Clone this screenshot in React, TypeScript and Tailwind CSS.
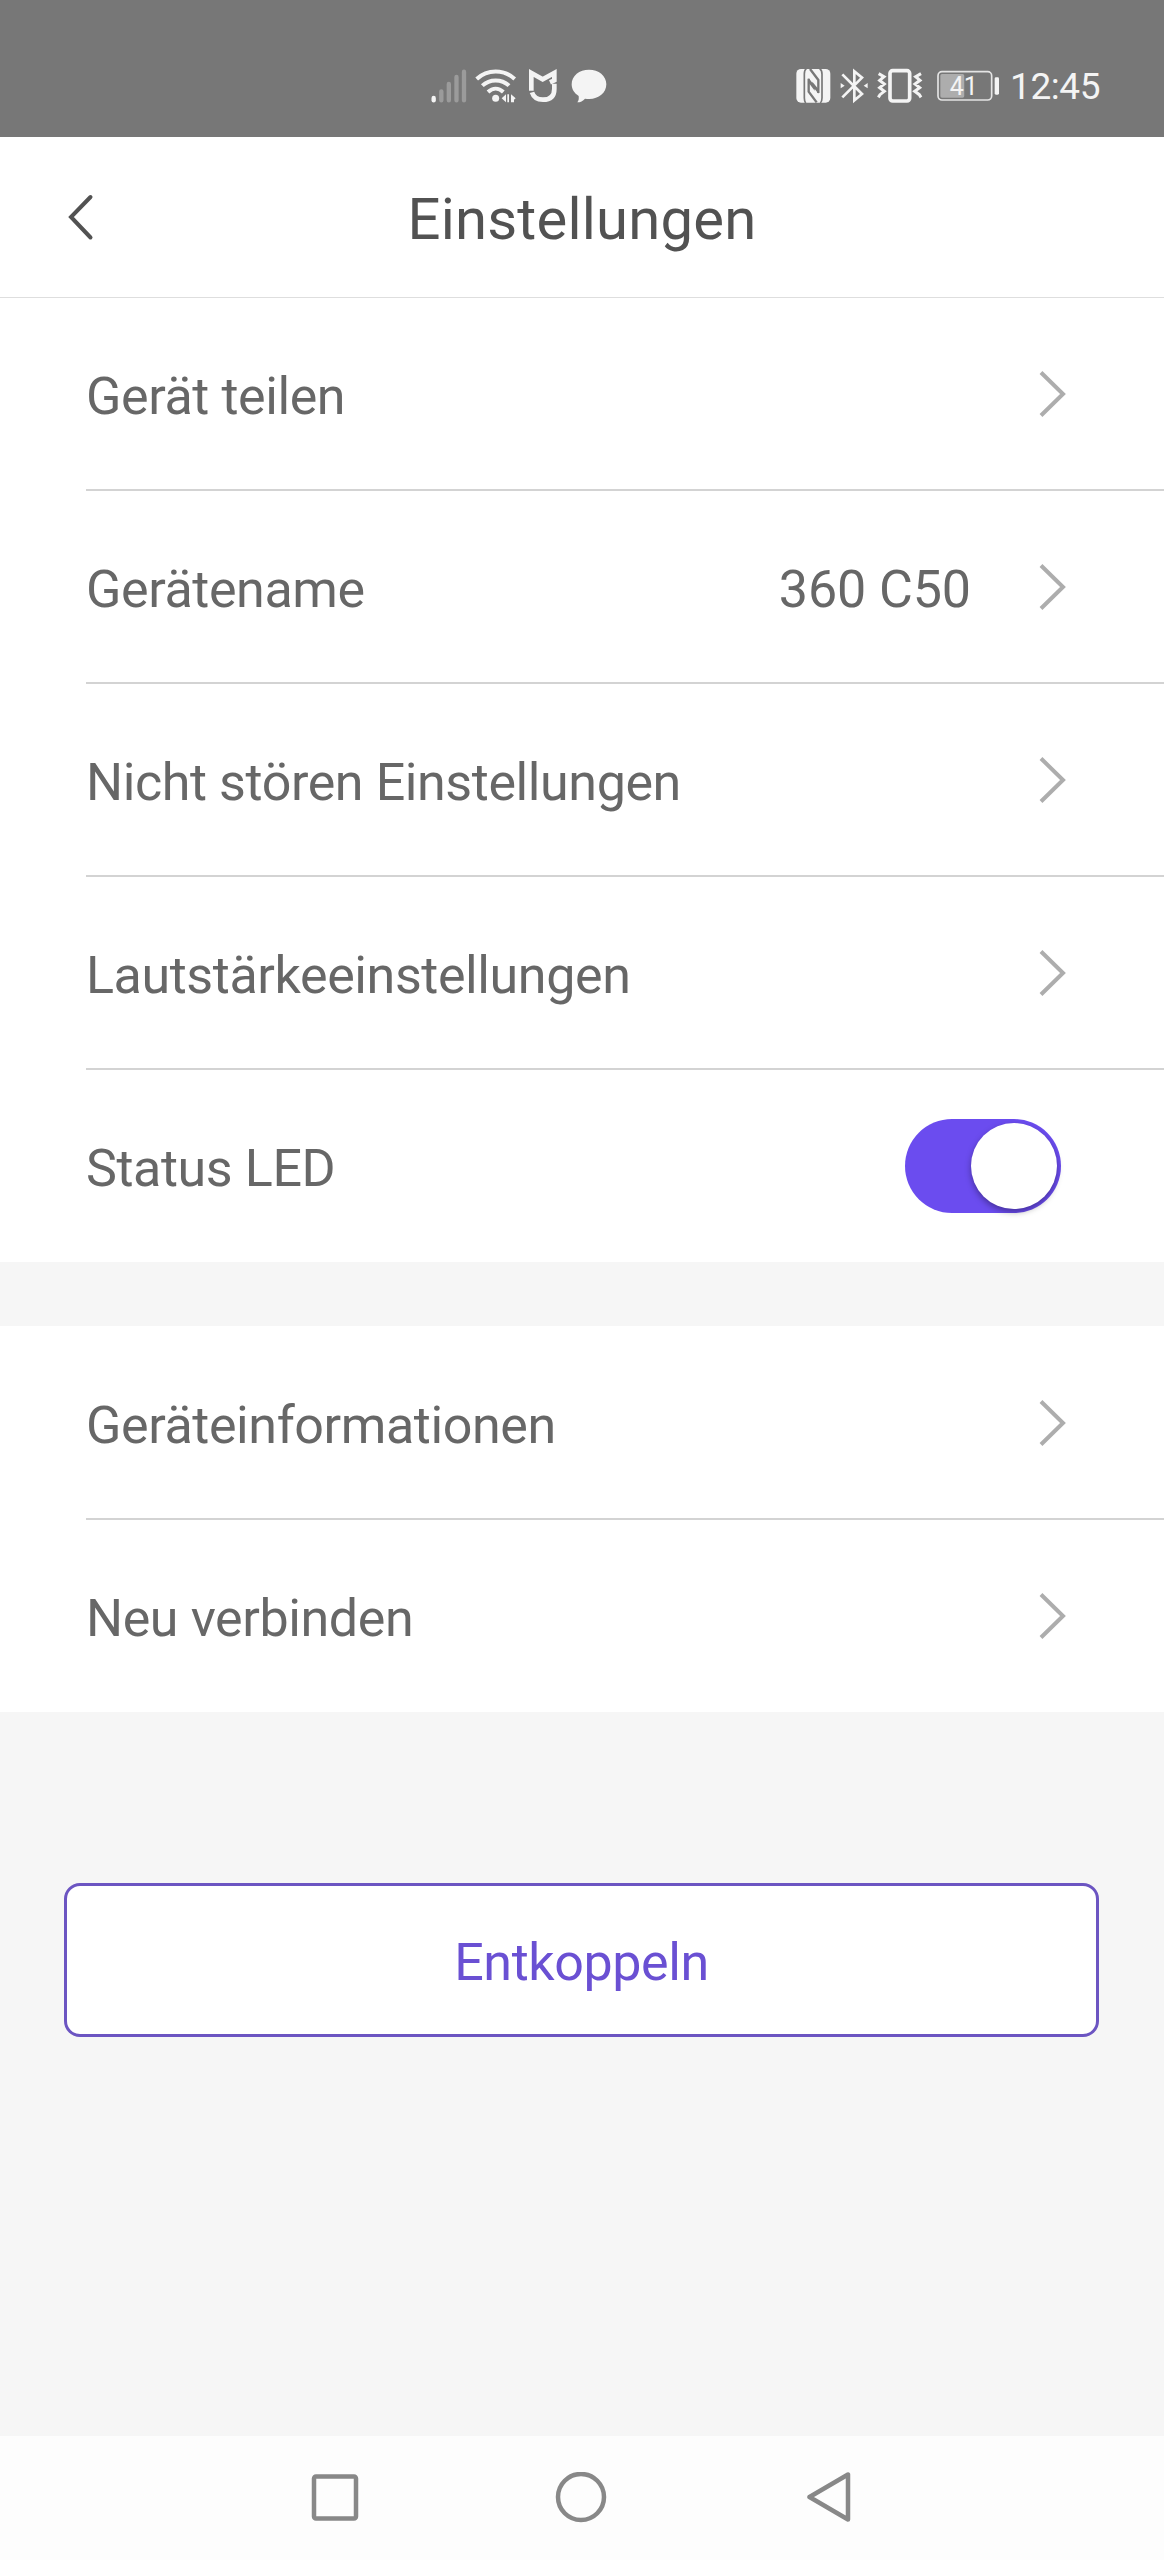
import { useState } from 'react'

interface RowProps {
  label: string
  value?: string
  last?: boolean
  children?: React.ReactNode
}

function SignalIcon() {
  return (
    <svg className="h-[70px] w-[42px]" viewBox="30 0 126 210" fill="none" strokeLinecap="round" strokeWidth="13">
      <path d="M41 144V151" stroke="#f4f4f4" />
      <path d="M64 124V151M86.5 102V151M109.5 81V151M132 65V151" stroke="#9b9b9b" />
    </svg>
  )
}

function WifiIcon() {
  return (
    <svg className="h-[70px] w-12" viewBox="156 0 144 210" fill="none" stroke="#f4f4f4" strokeWidth="12">
      <path d="M170 87C202 57 252 57 284 87M187 107C209 86 245 86 267 107M204 126C218 113 236 113 250 126" />
      <circle cx="227" cy="145" r="10.5" fill="#f4f4f4" stroke="none" />
      <path d="M245 145L258 133V157ZM262 133H267V157H262ZM273 133L287 145L282 149V157H273Z" fill="#f4f4f4" stroke="none" />
    </svg>
  )
}

function MiIcon() {
  return (
    <svg className="h-[70px] w-[46px]" viewBox="300 0 138 210" fill="none" stroke="#f4f4f4" strokeWidth="14">
      <path d="M334 122V69L368 88L403 69V91L390 97" />
      <path d="M336 127C341 143 352 149 369 149C391 149 403 138 403 116V101" />
    </svg>
  )
}

function ChatIcon() {
  return (
    <svg className="h-[70px] w-11" viewBox="438 0 132 210" fill="#f4f4f4">
      <path d="M507 59C536 59 559 77 559 103C559 129 536 147 508 147C503 147 499 147 495 146C489 153 481 157 472 157C476 152 477 147 476 138C463 130 455 118 455 103C455 77 478 59 507 59Z" />
    </svg>
  )
}

function NfcIcon() {
  return (
    <svg className="h-[70px] w-[42px]" viewBox="39 0 126 210" fill="none" stroke="#777">
      <rect x="49" y="57" width="102" height="101" rx="14" fill="#f4f4f4" stroke="none" />
      <path d="M79 56Q73 60 73 72V144Q73 153 77 159M121 159Q126 154 126 144V72Q126 60 119 56" strokeWidth="5" />
      <path d="M86 86V125L110 157M90 57L115 90V129" strokeWidth="7" />
      <path d="M86 84L104 108V122L86 98ZM115 131L97 107V95L115 117Z" fill="#777" stroke="none" />
    </svg>
  )
}

function BluetoothIcon() {
  return (
    <svg className="h-[70px] w-[37px]" viewBox="165 0 111 210" fill="none" stroke="#f4f4f4" strokeWidth="8">
      <path d="M187 73L246 132L223 151V64L246 83L187 142" />
      <path d="M182 99L194 107L182 115ZM263 99L251 107L263 115Z" fill="#f4f4f4" stroke="none" />
    </svg>
  )
}

function VibrateIcon() {
  return (
    <svg className="h-[70px] w-[55px]" viewBox="276 0 165 210" fill="none" stroke="#f4f4f4">
      <rect x="330" y="62" width="59" height="91" rx="8" strokeWidth="11" />
      <path
        d="M296 71L312 80L299 91L313 102L299 113L313 124L300 134L295 142M423 71L407 80L420 91L405 102L419 113L404 124L418 134L423 142"
        strokeWidth="9"
      />
    </svg>
  )
}

function BatteryIcon({ level }: { level: number }) {
  return (
    <svg className="h-[70px] w-[78px]" viewBox="441 0 234 210">
      <rect x="474" y="65" width="161" height="85" rx="12" fill="none" stroke="#e4e4e4" strokeWidth="5" />
      <rect x="481" y="72" width={level * 1.75} height="71" rx="5" fill="#adadad" />
      <rect x="644" y="82" width="13" height="52" rx="4" fill="#f4f4f4" />
      <text x="509" y="134" fill="#f4f4f4" className="font-['Roboto',sans-serif] text-[75px] tracking-normal">
        {level}
      </text>
    </svg>
  )
}

function Chevron() {
  return (
    <svg className="h-[48px] w-[28px]" viewBox="0 0 28 48" fill="none" stroke="#adadad" strokeWidth="4">
      <path d="M3 2.500L25 24L3 45.500" />
    </svg>
  )
}

function Row({ label, value, last, children }: RowProps) {
  return (
    <div className={`ml-[86px] flex items-center justify-between ${last ? 'h-48' : 'h-[193px] border-b-2 border-[#d3d3d3]'}`}>
      <span className="pt-[6px]">{label}</span>
      {children ?? (
        <div className="mr-[98px] flex items-center gap-[67px]">
          {value && <span className="pt-[6px] tracking-[-0.1px]">{value}</span>}
          <Chevron />
        </div>
      )}
    </div>
  )
}

export default function App() {
  const [led, setLed] = useState(true)

  return (
    <div className="flex h-[2560px] w-[1164px] flex-col bg-[#f6f6f6] font-['Roboto',sans-serif] text-[52px] leading-none tracking-[-0.4px] text-[#676767]">
      {/* Status bar */}
      <div className="flex h-[137px] shrink-0 items-start bg-[#777] pt-[50px] pl-[430px]">
        <SignalIcon />
        <WifiIcon />
        <MiIcon />
        <ChatIcon />
        <div className="ml-[183px] flex">
          <NfcIcon />
          <BluetoothIcon />
          <VibrateIcon />
          <BatteryIcon level={41} />
        </div>
        <span className="ml-[5px] pt-[18px] text-[37px] text-[#f4f4f4]">12:45</span>
      </div>

      {/* Header */}
      <header className="grid h-[161px] shrink-0 grid-cols-[1fr_auto_1fr] items-center border-b border-[#dedede] bg-white text-[#525252]">
        <button className="pl-[67px]">
          <svg className="h-[48px] w-[28px]" viewBox="0 0 28 48" fill="none" stroke="currentColor" strokeWidth="4" strokeLinecap="round">
            <path d="M23.500 4L4 24L23.500 44.500" />
          </svg>
        </button>
        <h1 className="pt-[3px] text-[58px] tracking-[0.2px]">Einstellungen</h1>
      </header>

      <section className="bg-white">
        <Row label="Gerät teilen" />
        <Row label="Gerätename" value="360 C50" />
        <Row label="Nicht stören Einstellungen" />
        <Row label="Lautstärkeeinstellungen" />
        <Row label="Status LED" last>
          <button
            onClick={() => setLed(!led)}
            className={`mr-[103px] mb-px flex h-[94px] w-[156px] items-center rounded-full px-1 ${
              led ? 'justify-end bg-[#6b4cef]' : 'justify-start bg-gray-300'
            }`}
          >
            <span className="size-[86px] rounded-full bg-white shadow-[0_3px_6px_rgba(0,0,0,0.35)]" />
          </button>
        </Row>
      </section>

      <section className="mt-16 bg-white pt-px">
        <Row label="Geräteinformationen" />
        <Row label="Neu verbinden" last />
      </section>

      <button className="mr-[65px] ml-16 mt-[171px] h-[154px] rounded-[16px] border-[3px] border-[#6c55c2] bg-white pt-[5px] text-[#6a50d3]">
        Entkoppeln
      </button>

      {/* System navigation */}
      <nav className="mt-auto flex h-[124px] items-center bg-[#fdfdfd] pl-[310px] text-[#888]">
        <svg className="size-[50px]" viewBox="0 0 50 50" fill="none" stroke="currentColor" strokeWidth="4.5">
          <rect x="4" y="3.5" width="42" height="42" rx="2" />
        </svg>
        <svg className="ml-[195px] size-[52px]" viewBox="0 0 52 52" fill="none" stroke="currentColor" strokeWidth="4.5">
          <circle cx="26" cy="25" r="23" />
        </svg>
        <svg className="ml-[199px] h-[52px] w-[46px]" viewBox="0 0 46 52" fill="none" stroke="currentColor" strokeWidth="4.5" strokeLinejoin="round">
          <path d="M42 2.500V47.500L3.500 25Z" />
        </svg>
      </nav>
    </div>
  )
}
